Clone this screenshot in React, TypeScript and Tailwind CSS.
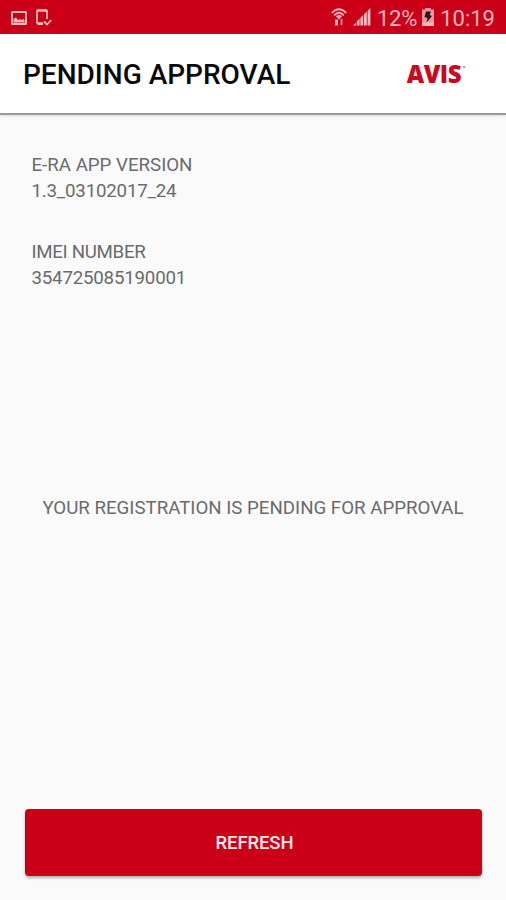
function StatusBar() {
  return (
    <div className="flex h-[34px] items-center bg-[#cb0018] pr-[11px] pl-[11px] text-[#f6b9be]">
      <svg className="mt-px" width="16" height="14" viewBox="0 0 16 14" fill="none" stroke="currentColor" strokeWidth="2">
        <rect x="1" y="1" width="14" height="12" rx="0.5" />
        <path d="M2.500 11.500V8L5 6.500 7 9l2-1 1.500 1L12 8l1.500 1v2.500z" fill="currentColor" stroke="none" />
      </svg>
      <svg className="mt-0.5 ml-[9px]" width="16" height="18" viewBox="0 0 16 18" fill="none" stroke="currentColor" strokeWidth="1.8">
        <path d="M11 10V2.500Q11 1 9.500 1H2.500Q1 1 1 2.500V13.500Q1 15 2.500 15H7" />
        <path d="M2 1.500h8M2 14.500h5" strokeWidth="2.400" />
        <path d="M8 12.500l3 3 4.200-4.500" />
      </svg>
      <svg className="ml-auto" width="16" height="18" viewBox="0 0 16 18" fill="none" stroke="currentColor" strokeWidth="1.8">
        <path d="M.8 4.800Q8-2.200 15.200 4.800M3.200 7.300Q8 2.200 12.800 7.300" />
        <path d="M5 8.200Q8 5.600 11 8.200L8 11.500z" fill="currentColor" stroke="none" />
        <path d="M5.500 11.500v6" strokeWidth="3" />
        <path d="M10.500 11v6" strokeWidth="1.800" opacity=".75" />
      </svg>
      <svg className="ml-[6px]" width="18" height="18" viewBox="0 0 18 18" fill="currentColor">
        <path d="M0 17.500L3 14.500V17.500zM3.800 13.500L6.600 10.500v7H3.800zM7.400 9.800L10.200 7v10.500H7.400zM11 6.300l2.800-2.800v14H11zM14.600 2.800L17.400 0v17.500h-2.800z" />
      </svg>
      <span className="mt-0.5 ml-[6px] text-[22px] tracking-[-0.2px]">12%</span>
      <svg className="ml-[5px]" width="12" height="18" viewBox="0 0 12 18">
        <path d="M3 0h6v1.500h3V18H0V1.500h3z" fill="#e9969f" />
        <path d="M0 14.500h12V18H0z" fill="#f6b9be" />
        <path d="M4 3.500h5L7.500 7 10 8 4.500 14.500 5.500 10 2.500 9z" fill="#2d1216" />
      </svg>
      <span className="mt-0.5 ml-[6px] text-[22px]">10:19</span>
    </div>
  );
}

export default function App() {
  return (
    <main className="flex h-[900px] w-[506px] flex-col bg-[#fafafa] font-['Roboto',sans-serif] text-[#6b6b6b]">
      <StatusBar />
      <header className="flex h-[81px] items-center justify-between border-b-2 border-[#999] bg-white pr-[41px] pl-[23px] shadow-sm">
        <h1 className="mt-0.5 text-[28px] font-medium text-[#080808]">PENDING APPROVAL</h1>
        <div className="flex text-[#cc0820]">
          <span className="font-['Open_Sans',sans-serif] text-[24px] leading-[31px] font-extrabold tracking-[-0.5px]">AVIS</span>
          <span className="mt-2 ml-0.5 size-[2px] rounded-full bg-[#d96a75]" />
        </div>
      </header>
      <section className="pr-8 pl-[31.5px] pt-[37px] text-[18.7px] leading-[26px]">
        <p>E-RA APP VERSION</p>
        <p className="tracking-[-0.2px]">1.3_03102017_24</p>
        <p className="mt-[35px] tracking-[-0.3px]">IMEI NUMBER</p>
        <p className="tracking-[-0.2px]">354725085190001</p>
      </section>
      <p className="mt-[204px] text-center text-[18.7px] leading-[26px]">YOUR REGISTRATION IS PENDING FOR APPROVAL</p>
      <button className="mt-auto mr-6 mb-6 ml-[25px] h-[67px] rounded bg-[#cb0018] pt-[3px] pl-0.5 text-[18.5px] font-medium tracking-[-0.1px] text-[#ffe8ea] shadow-[0_2px_3px_rgba(0,0,0,0.3)]">
        REFRESH
      </button>
    </main>
  );
}
